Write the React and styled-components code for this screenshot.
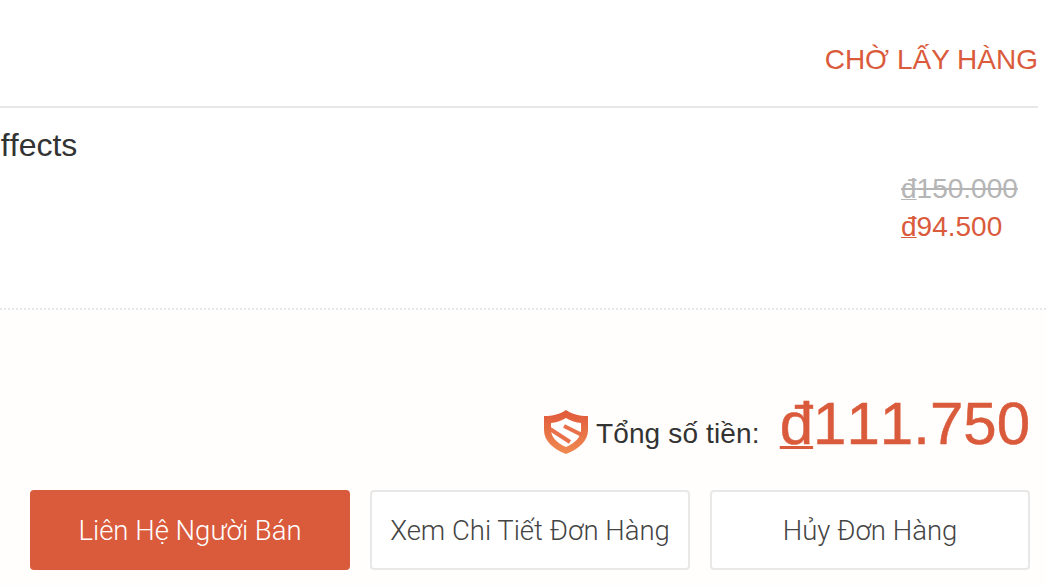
import React from 'react';
import styled, { createGlobalStyle } from 'styled-components';

const GlobalStyle = createGlobalStyle`
	html, body {
		margin: 0;
		padding: 0;
		background: #fff;
		overflow: hidden;
	}
	body {
		font-family: "Liberation Sans", Arial, sans-serif;
		font-kerning: none;
	}
`;

const Page = styled.div`
	width: 1046px;
	height: 586px;
	overflow: hidden;
	display: flex;
	flex-direction: column;
`;

const StatusBar = styled.header`
	height: 108px;
	margin-right: 8px;
	display: flex;
	justify-content: flex-end;
	padding-top: 44px;
	box-sizing: border-box;
	border-bottom: 2px solid #e8e8e8;
`;

const Status = styled.span`
	font-size: 28px;
	line-height: 32px;
	color: #da5b3c;
	font-kerning: normal;
`;

const Product = styled.section`
	height: 202px;
	box-sizing: border-box;
	border-bottom: 2px dotted #e8e8e8;
	display: flex;
	justify-content: space-between;
	padding-right: 28px;
`;

const ProductName = styled.div`
	margin: 19px 0 0 -20.5px;
	font-size: 32px;
	line-height: 36px;
	color: #333;
`;

const Prices = styled.div`
	margin-top: 62px;
	width: 117px;
	font-size: 28px;
	line-height: 38px;
`;

const OldPrice = styled.div`
	color: #b5b5b5;
	text-decoration: line-through;
`;

const NewPrice = styled.div`
	color: #da5b3c;
`;

const Dong = styled.span`
	text-decoration: underline;
	text-decoration-thickness: 0.05em;
	text-underline-offset: 0.04em;
	text-decoration-skip-ink: none;
`;

const Summary = styled.section`
	flex: 1;
	background: #fffefc;
	display: flex;
	flex-direction: column;
	align-items: flex-end;
	padding: 82px 16px 0 0;
`;

const TotalRow = styled.div`
	display: flex;
	align-items: flex-end;
	height: 64px;
`;

const TotalLabel = styled.span`
	margin: 0 20px 2px 8px;
	font-size: 28px;
	line-height: 40px;
	letter-spacing: 0.15px;
	color: #333;
`;

const TotalValue = styled.span`
	font-size: 60px;
	line-height: 64px;
	color: #da5b3c;
	-webkit-text-stroke: 0.5px #da5b3c;
`;

const Actions = styled.div`
	display: flex;
	gap: 20px;
	margin-top: 34px;
`;

const Button = styled.button`
	width: 320px;
	height: 80px;
	padding: 0;
	box-sizing: border-box;
	border-radius: 4px;
	font-family: Roboto, "Liberation Sans", sans-serif;
	font-weight: 300;
	font-size: 27.5px;
	border: 2px solid ${props => (props.$primary ? '#da5b3c' : '#e8e8e8')};
	background: ${props => (props.$primary ? '#da5b3c' : '#fff')};
	color: ${props => (props.$primary ? '#fff' : '#444')};
`;

const ShieldSvg = styled.svg`
	flex: none;
	margin-bottom: 2px;
`;

const ShieldIcon = () => (
	<ShieldSvg width="44" height="44" viewBox="0 0 44 44">
		<defs>
			<linearGradient id="shield" x1="0" y1="0" x2="0" y2="1">
				<stop offset="0" stopColor="#e0593a" />
				<stop offset="1" stopColor="#f08a50" />
			</linearGradient>
		</defs>
		<path d="M22 0 C28 4 35 6 44 6 L44 20 C44 31 35 39 22 44 C9 39 0 31 0 20 L0 6 C9 6 16 4 22 0 Z" fill="url(#shield)" />
		<path d="M22 8 C27 11 32 12.500 37 13 L37 20 C37 27 31 33 22 37 C13 33 7 27 7 20 L7 13 C12 12.500 17 11 22 8 Z" fill="#fff" />
		<path d="M20 16 L38 25 M6 19 L26 32" fill="none" stroke="#e8704a" strokeWidth="4" />
	</ShieldSvg>
);

export default function App() {
	return (
		<Page>
			<GlobalStyle />
			<StatusBar>
				<Status>CHỜ LẤY HÀNG</Status>
			</StatusBar>
			<Product>
				<ProductName>Effects</ProductName>
				<Prices>
					<OldPrice><Dong>đ</Dong>150.000</OldPrice>
					<NewPrice><Dong>đ</Dong>94.500</NewPrice>
				</Prices>
			</Product>
			<Summary>
				<TotalRow>
					<ShieldIcon />
					<TotalLabel>Tổng số tiền:</TotalLabel>
					<TotalValue><Dong>đ</Dong>111.750</TotalValue>
				</TotalRow>
				<Actions>
					<Button $primary>Liên Hệ Người Bán</Button>
					<Button>Xem Chi Tiết Đơn Hàng</Button>
					<Button>Hủy Đơn Hàng</Button>
				</Actions>
			</Summary>
		</Page>
	);
}
